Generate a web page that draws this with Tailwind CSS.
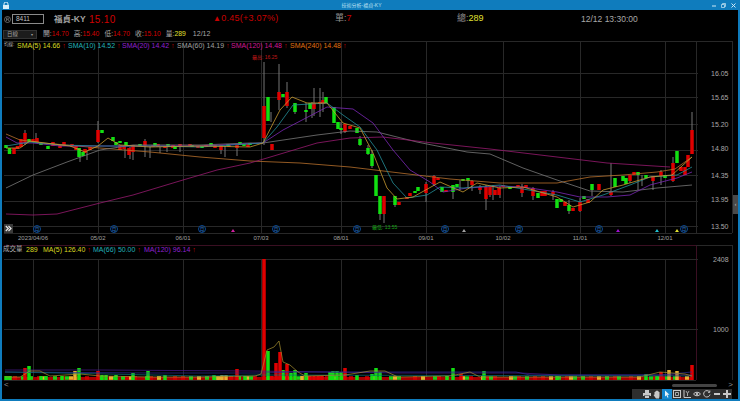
<!DOCTYPE html>
<html lang="zh-Hant">
<head>
<meta charset="utf-8">
<script src="https://cdn.jsdelivr.net/npm/@tailwindcss/browser@4"></script>
</head>
<body class="bg-black">
<div class="relative flex h-[401px] w-[740px] flex-col overflow-hidden border-x-2 border-b-2 border-[#0f7cbd] bg-black font-['Liberation_Sans','Noto_Sans_CJK_TC',sans-serif] text-[#a8a8a8]">
  <!-- title bar -->
  <div class="-mx-[2px] flex h-[10px] shrink-0 items-center justify-between bg-[#0f7cbd] pl-[3px] pr-[4px]">
    <svg width="6" height="7" viewBox="0 0 6 7"><path d="M1 3V2a2 2 0 0 1 4 0v1" fill="none" stroke="#d8eef8"/><rect y="3" width="6" height="4" fill="#d8eef8"/></svg>
    <span class="ml-[2px] text-[5px] leading-none text-[#bfe0f2]">技術分析-福貞-KY</span>
    <div class="flex items-center gap-[5px] text-[#cfe8f5]">
      <svg width="4" height="5" viewBox="0 0 4 5"><path d="M0 3h4" stroke="currentColor"/></svg>
      <svg width="5" height="5" viewBox="0 0 5 5"><path d="M.5 1.500h3v3h-3zM1.500 1.500v-1h3v3h-1" fill="none" stroke="currentColor" stroke-width=".7"/></svg>
      <svg width="5" height="5" viewBox="0 0 5 5"><path d="M.5.5l4 4M4.500.5l-4 4" stroke="currentColor"/></svg>
    </div>
  </div>
  <!-- quote row -->
  <div class="flex h-[18px] shrink-0 items-center whitespace-nowrap text-[9px]">
    <svg class="ml-[2px]" width="7" height="7" viewBox="0 0 7 7"><circle cx="3.500" cy="3.500" r="3" fill="none" stroke="#8a8a8a" stroke-width=".7"/><path d="M2.500 5V2h1.500a.8.8 0 0 1 0 1.600H2.500M3.800 3.600L5 5" fill="none" stroke="#8a8a8a" stroke-width=".6"/></svg>
    <div class="ml-[1px] flex h-[10px] w-[32px] items-center border border-[#8a8a8a] bg-black pl-[3px] text-[6.500px] text-[#c0c0c0]">8411</div>
    <span class="ml-[10px] w-[35px] text-[8.500px] font-bold text-[#a0a0a0]">福貞-KY</span>
    <span class="w-[124px] text-[10px] tracking-[0.3px] text-[#d00000]">15.10</span>
    <span class="w-[122px] text-[#c80000] tracking-[0.25px]"><span class="text-[8px]">▲</span>0.45(+3.07%)</span>
    <span class="w-[122px] text-[#909090]">單:<span class="text-[#d00000]">7</span></span>
    <span class="w-[124px] text-[#909090]">總:<span class="text-[#e0e030]">289</span></span>
    <span class="text-[8.500px] text-[#a8a8a8]">12/12 13:30:00</span>
  </div>
  <!-- ohlc row -->
  <div class="flex h-[13px] shrink-0 items-center gap-[5px] whitespace-nowrap text-[6.800px]">
    <div class="ml-[1px] flex h-[9px] w-[34px] items-center justify-between border border-[#333] bg-[#1c1c1c] px-[3px] text-[5.500px] text-[#a0a0a0]"><span>日線</span><span class="text-[4px]">▾</span></div>
    <span class="ml-[1px]">開:<span class="text-[#d00000]">14.70</span></span>
    <span>高:<span class="text-[#d00000]">15.40</span></span>
    <span>低:<span class="text-[#d00000]">14.70</span></span>
    <span>收:<span class="text-[#d00000]">15.10</span></span>
    <span>量:<span class="text-[#e0e030]">289</span></span>
    <span class="ml-[2px] text-[7px]">12/12</span>
  </div>
  <!-- price chart -->
  <div class="relative h-[203px] shrink-0">
    <svg class="block" width="736" height="203" viewBox="2 41 736 203" font-family="Liberation Sans, Noto Sans CJK TC, sans-serif">
      <g stroke="#282828" fill="none" shape-rendering="crispEdges">
        <path d="M4 41.500H732.500V233M4 73.500H698M4 97.500H698M4 124.500H698M4 150.500H698M4 175.500H698M4 201.500H698M4 226.500H698M4 233.500H732"/>
        <path d="M33.500 41V233M98.500 41V233M183.500 41V233M261.500 41V233M341.500 41V233M426.500 41V233M503.500 41V233M580.500 41V233M665.500 41V233M696.500 41V233"/>
      </g>
      <!-- wicks -->
      <path fill="none" stroke="#777" stroke-width="1" d="M25 130V145M36 133V142M98 121V143M80 148V162M87 150V160M125 146V158M130 147V159M133 146V160M145 139V157M150 146V158M160 147V153M167 146V152M180 146V152M221 146V154M225 146V157M237 147V156M264 62V145M271 112V122M279 64V110M287 82V108M295 103V114M306 103V122M312 102V118M314 88V116M320 88V117M323 92V112M345 124V133M341 122V134M360 136V146M368 145V155M372 150V168M380 196V220M384 196V223M395 196V207M426 182V202M434 175V186M453 185V199M460 180V190M468 178V188M472 180V191M480 185V194M486 185V210M490 187V197M493 185V200M500 186V198M522 184V197M533 187V200M553 190V200M569 200V214M580 198V212M592 186V196M611 163V196M630 176V183M638 172V190M642 175V186M653 176V190M661 170V185M673 157V182M692 112V130"/>
      <!-- red bodies -->
      <path fill="none" stroke="#e00000" stroke-width="3.500" d="M14 148V154M17.500 146V149M21 139V147M25 133V143M33 139V142M37 138V142M53 142V146M60 145V148M64 142V146M72 144V147M76 146V150M85 149V153M90 147V150M98 130V142M120 145V150M124 146V149M129 148V155M133 145V152M145 141V146M153 145V147M158 144V147M165 146V148M173 145V148M180 144V146M190 144V146M198 146V148M206 145V147M215 145V148M221 145V150M229 145V147M237 145V148M248 144V147M264 106V138M272 144V150M279 92V100M287 92V106M314 103V109M320 102V104M323 100V104M345 124V132M350 126V129M384 196V214M399 202V205M407 197V199M410 193V196M426 184V193M434 176V184M438 178V180M446 190V192M472 181V185M480 187V190M486 187V199M490 187V195M495 190V195M499 188V195M503 185V187M518 185V187M522 187V193M526 185V188M533 188V196M542 191V196M545 191V196M553 192V195M565 202V206M573 208V211M580 202V211M588 199V203M599 184V190M611 191V195M630 175V181M634 172V175M653 176V181M661 172V176M673 163V181M681 167V171M685 167V175M688 155V167M692 130V154"/>
      <!-- green bodies -->
      <path fill="none" stroke="#12e012" stroke-width="3.500" d="M6 145V148M9.500 148V154M29 139V142M41 143V145M48 146V149M79 148V157M83 152V156M102 130V133M113 137V141M116 142V145M120 141V143M126 142V145M140 144V146M155 143V146M168 144V147M175 146V149M192 145V147M202 146V148M211 143V146M228 144V146M240 142V145M244 144V146M250 143V145M268 97V121M283 94V97M295 103V112M306 110V112M310 103V109M326 97V103M334 107V123M338 122V129M341 128V130M357 128V133M360 139V145M368 148V154M372 154V166M376 175V196M380 196V214M395 196V205M415 191V193M418 187V191M442 187V192M453 185V192M457 184V187M463 179V181M468 178V181M510 187V189M538 193V198M557 199V208M561 199V202M569 205V211M584 196V199M592 184V190M615 178V187M623 176V181M626 178V184M638 172V175M646 175V178M665 175V178M677 151V163"/>
      <!-- moving averages -->
      <g fill="none" stroke-width=".8" stroke-linejoin="round">
        <polyline stroke="#b8702c" points="6,134 20,140 43,143 100,148 150,152 200,157 250,161 300,163 350,167 400,173 450,179 500,183 557,183 590,177 623,175 657,172 675,169 692,157"/>
        <polyline stroke="#787878" points="6,188 33,175 67,162 100,150 133,145 200,145 250,143 263,143 317,135 350,131 377,132 417,142 467,152 490,154 523,168 557,180 590,191 623,192 657,188 692,185"/>
        <polyline stroke="#981a70" points="6,214 33,215 57,214 100,203 133,195 183,180 217,170 250,163 267,158 317,143 350,138 383,137 433,143 490,149 557,157 607,163 670,167"/>
        <polyline stroke="#7c28b8" points="6,137 17,143 33,143 60,146 100,146 150,146 200,146 263,143 283,130 327,107 353,109 373,123 393,150 410,170 430,182 443,192 467,188 500,186 523,187 557,192 580,197 607,197 630,195 650,185 677,178 692,172"/>
        <polyline stroke="#258e98" points="6,146 30,142 60,145 100,146 150,146 200,147 263,143 277,127 293,105 327,103 343,115 360,127 377,150 393,183 407,198 427,195 440,187 463,188 500,185 557,195 580,202 603,195 630,185 650,177 677,175 692,167"/>
        <polyline stroke="#c89a30" points="6,148 20,148 30,141 45,143 70,146 85,152 98,146 108,138 120,145 150,147 200,146 250,147 263,143 280,110 292,97 307,103 327,103 343,123 360,128 373,153 387,188 397,199 413,197 440,182 463,192 477,183 500,188 523,187 557,197 573,207 590,202 603,190 623,185 650,177 672,175 692,157"/>
      </g>
      <!-- markers -->
      <g fill="none" stroke="#0b4a92">
        <circle cx="37" cy="229" r="3.500"/><circle cx="114" cy="229" r="3.500"/><circle cx="202" cy="229" r="3.500"/><circle cx="276" cy="229" r="3.500"/><circle cx="357" cy="229" r="3.500"/><circle cx="445" cy="229" r="3.500"/><circle cx="519" cy="229" r="3.500"/><circle cx="599" cy="229" r="3.500"/><circle cx="684" cy="229" r="3.500"/>
      </g>
      <g font-size="5" fill="#2a70c0" text-anchor="middle">
        <text x="37" y="231">月</text><text x="114" y="231">月</text><text x="202" y="231">月</text><text x="276" y="231">月</text><text x="357" y="231">月</text><text x="445" y="231">月</text><text x="519" y="231">月</text><text x="599" y="231">月</text><text x="684" y="231">月</text>
      </g>
      <path fill="#d020a0" d="M233 229l2 3h-4z"/><path fill="#a0a0a0" d="M464 229l2 3h-4z"/><path fill="#a010d0" d="M618 229l2 3h-4z"/><path fill="#20c0d0" d="M657 229l2 3h-4z"/><path fill="#e0e030" d="M677 229l2 3h-4z"/>
      <text x="252" y="59" font-size="5" fill="#c01818">最高: 16.25</text>
      <text x="372" y="229" font-size="5" fill="#18a018">最低: 13.55</text>
      <g font-size="7" fill="#a8a8a8">
        <text x="711" y="76">16.05</text><text x="711" y="100">15.65</text><text x="711" y="127">15.20</text><text x="711" y="151">14.80</text><text x="711" y="178">14.35</text><text x="711" y="202">13.95</text><text x="711" y="229">13.50</text>
      </g>
      <g font-size="6" fill="#a0a0a0" text-anchor="middle">
        <text x="33" y="240">2023/04/06</text><text x="98" y="240">05/02</text><text x="183" y="240">06/01</text><text x="261" y="240">07/03</text><text x="341" y="240">08/01</text><text x="426" y="240">09/01</text><text x="503" y="240">10/02</text><text x="580" y="240">11/01</text><text x="665" y="240">12/01</text>
      </g>
    </svg>
    <!-- legend over the chart -->
    <div class="absolute left-[2px] top-0 flex h-[9px] items-center whitespace-nowrap text-[7px] leading-none">
      <span class="w-[13px] text-[4.500px] text-[#b0b0b0]">均線:</span>
      <span class="w-[51px] text-[#d8d820]">SMA(5) 14.66 <span class="text-[#d00000]">↑</span></span>
      <span class="w-[54px] text-[#20b0b8]">SMA(10) 14.52 <span class="text-[#d00000]">↑</span></span>
      <span class="w-[55px] text-[#9020d0]">SMA(20) 14.42 <span class="text-[#d00000]">↑</span></span>
      <span class="w-[54px] text-[#a0a0a0]">SMA(60) 14.19 <span class="text-[#d00000]">↑</span></span>
      <span class="w-[59px] text-[#d01890]">SMA(120) 14.48 <span class="text-[#d00000]">↑</span></span>
      <span class="text-[#e07010]">SMA(240) 14.48 <span class="text-[#d00000]">↑</span></span>
    </div>
    <div class="absolute left-[2px] top-[183px] flex h-[9px] w-[9px] items-center justify-center bg-[#3a3a3a]">
      <svg width="7" height="7" viewBox="0 0 7 7" fill="none" stroke="#e8e8e8" stroke-width="1.200"><path d="M.8 1l2.500 2.500L.8 6M3.500 1L6 3.500 3.500 6"/></svg>
    </div>
  </div>
  <!-- volume chart -->
  <div class="relative h-[137px] shrink-0">
    <svg class="block" width="736" height="137" viewBox="2 244 736 137" font-family="Liberation Sans, Noto Sans CJK TC, sans-serif">
      <g fill="none" shape-rendering="crispEdges">
        <path stroke="#3a0f22" d="M4 245.500H696M696.500 245V380"/>
        <path stroke="#282828" d="M696 245.500H732.500V380M4 259.500H698M4 329.500H698M4 380.500H696M33.500 259V380M98.500 259V380M183.500 259V380M261.500 259V380M341.500 259V380M426.500 259V380M503.500 259V380M580.500 259V380M665.500 259V380"/>
      </g>
      <g fill="none" stroke-width="3.500">
        <path stroke="#a80000" stroke-width="3" d="M5 378.500H692"/>
        <path stroke="#d00000" stroke-dasharray="4 4 4 12" d="M5 378H692"/>
        <path stroke="#18d018" stroke-dasharray="4 12 4 4 4 20 4 8 4 28" d="M5 378H692"/>
        <path stroke="#e8b030" stroke-dasharray="4 24 4 36 4 16" d="M41 378H692"/>
        <path stroke="#12e012" d="M6 380V376M10 380V376M29 380V366M41 380V376M46 380V376M62 380V376M79 380V368M102 380V375M106 380V375M116 380V375M133 380V373M148 380V371M165 380V375M214 380V375M245 380V376M268 380V351M283 380V370M291 380V373M295 380V370M306 380V373M330 380V372M333 380V371M337 380V371M341 380V372M357 380V375M372 380V374M376 380V368M380 380V372M453 380V368M484 380V371M447 380V376M557 380V376M646 380V374M657 380V376"/>
        <path stroke="#e00000" d="M25 380V368M98 380V371M237 380V369M264 380V259M272 380V376M276 380V363M280 380V352M287 380V364M310 380V376M314 380V376M318 380V376M322 380V376M345 380V368M461 380V374M661 380V372M692 380V365"/>
        <path stroke="#e8b030" d="M75 380V371M218 380V376M222 380V375M226 380V375M669 380V370M677 380V371M302 380V376"/>
      </g>
      <g fill="none" stroke-width=".7">
        <polyline stroke="#4a1a90" points="5,370 100,370 250,371 400,373 520,373 560,375 692,375"/>
        <polyline stroke="#2c2c98" points="5,372 150,373 260,373 300,372 516,372 530,375 660,375 692,372"/>
        <polyline stroke="#0f7078" points="5,372 60,373 200,376 260,375 692,376"/>
        <polyline stroke="#a89030" points="5,377 20,377 30,371 40,371 50,376 80,374 100,376 150,377 200,377 255,376 261,374 267,350 274,347 279,341 283,362 290,365 298,372 305,376 345,375 370,371 385,371 398,377 450,376 470,372 480,377 640,377 660,372 685,374 692,376"/>
      </g>
      <g font-size="7" fill="#a8a8a8"><text x="713" y="262">2408</text><text x="713" y="332">1000</text></g>
    </svg>
    <div class="absolute left-[1px] top-[1px] flex h-[9px] items-center whitespace-nowrap text-[7px] leading-none">
      <span class="w-[23px] text-[6.500px] text-[#b0b0b0]">成交量</span>
      <span class="w-[17px] text-[#d8d820]">289</span>
      <span class="w-[50px] text-[#d8d820]">MA(5) 126.40 <span class="text-[#d00000]">↑</span></span>
      <span class="w-[51px] text-[#20b0b8]">MA(66) 50.00 <span class="text-[#d00000]">↑</span></span>
      <span class="text-[#9020d0]">MA(120) 96.14 <span class="text-[#d00000]">↑</span></span>
    </div>
  </div>
  <!-- bottom strip -->
  <div class="relative min-h-0 flex-1">
    <span class="absolute left-[2px] top-0 text-[8px] leading-[8px] text-[#909090]">&lt;</span>
    <span class="absolute right-[5px] top-0 text-[8px] leading-[8px] text-[#909090]">&gt;</span>
    <div class="absolute left-[670px] top-[3px] h-[3px] w-[45px] rounded-full bg-[#444]"></div>
    <div class="absolute bottom-0 right-[6px] flex h-[10px] bg-[#2e2e2e] text-[#c8c8c8]">
      <div class="w-[10px]"></div>
      <div class="flex w-[10px] items-center justify-center"><svg width="8" height="8" viewBox="0 0 8 8" fill="currentColor"><path d="M2 0h4v3H2zM0 3h8v3H6.500V5h-5v1H0zM2 5.500h4V8H2z"/></svg></div>
      <div class="flex w-[10px] items-center justify-center"><svg width="8" height="9" viewBox="0 0 8 9" fill="currentColor"><path d="M1.500 2h1V1h1V.5h1V1h1v1h1v4L6 8.500H3L.5 5l1-.5z"/></svg></div>
      <div class="flex w-[10px] items-center justify-center bg-[#1488d0]"><svg width="8" height="8" viewBox="0 0 8 8" fill="#e8f4fb"><path d="M2 .5l4.500 4.200H4.400L5.500 7.200l-1 .5-1-2.500L2 6.500z"/></svg></div>
      <div class="flex w-[10px] items-center justify-center"><svg width="8" height="8" viewBox="0 0 8 8" fill="none" stroke="currentColor"><rect x=".5" y=".5" width="7" height="7"/><path d="M2.500 2.500h3v3h-3z" stroke-width=".8"/></svg></div>
      <div class="flex w-[10px] items-center justify-center"><svg width="8" height="8" viewBox="0 0 8 8" fill="none" stroke="currentColor"><path d="M1 0v7.500h7"/><path d="M3 1l1.500 2.500L6 1M4.500 3.500V6" stroke-width=".8"/></svg></div>
      <div class="flex w-[10px] items-center justify-center"><svg width="8" height="6" viewBox="0 0 8 6" fill="none" stroke="currentColor"><path d="M.5 3C2 .7 6 .7 7.500 3 6 5.300 2 5.300.5 3z"/><circle cx="4" cy="3" r=".8" fill="currentColor"/></svg></div>
      <div class="flex w-[10px] items-center justify-center"><svg width="8" height="8" viewBox="0 0 8 8" fill="none" stroke="currentColor"><path d="M6.500 2A3.200 3.200 0 1 0 7 4.500M6.800.5V2.300H5"/></svg></div>
      <div class="flex w-[10px] items-center justify-center"><svg width="8" height="8" viewBox="0 0 8 8" stroke="currentColor" stroke-width="2"><path d="M1 4h6"/></svg></div>
      <div class="flex w-[10px] items-center justify-center"><svg width="8" height="8" viewBox="0 0 8 8" stroke="currentColor" stroke-width="2"><path d="M0 4h8M4 0v8"/></svg></div>
    </div>
  </div>
  <!-- right side handle -->
  <div class="absolute left-[731px] top-[195px] flex h-[19px] w-[5px] items-center justify-center bg-[#4a4a4a] text-[5px] leading-none text-[#d0d0d0]">‹</div>
</div>
</body>
</html>
